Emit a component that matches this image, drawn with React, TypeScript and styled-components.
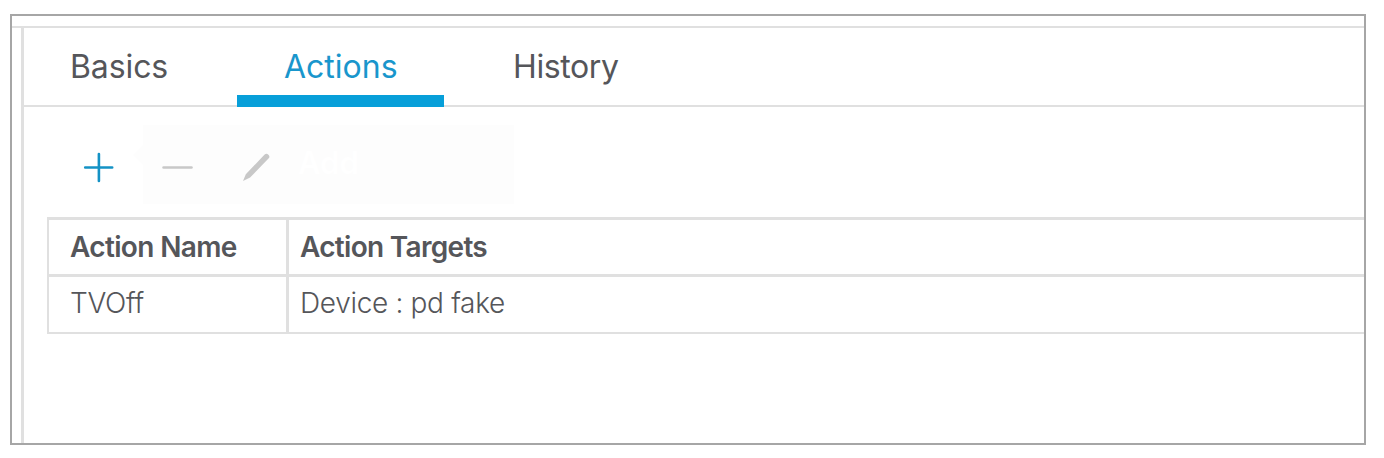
import React from "react";
import styled, { createGlobalStyle } from "styled-components";

const GlobalStyle = createGlobalStyle`
  * { box-sizing: border-box; }
  body {
    margin: 0;
    background: #ffffff;
    color: #55565a;
    font-family: Inter, "Liberation Sans", sans-serif;
  }
`;

const Page = styled.div`
  width: 1384px;
  height: 458px;
  padding: 14px 18px 13px 10px;
`;

const Frame = styled.div`
  height: 431px;
  border: 2px solid #a6a6a6;
  padding-top: 10px;
  overflow: hidden;
`;

const Body = styled.div`
  height: 417px;
  border-top: 2px solid #e0e0e0;
  padding-left: 9px;
`;

const Panel = styled.main`
  height: 415px;
  border-left: 3px solid #e0e0e0;
`;

const TabBar = styled.nav`
  display: flex;
  height: 79px;
  border-bottom: 2px solid #e0e0e0;
`;

const Tab = styled.button<{ $width: number; $inset: number; $spacing: number; $active?: boolean }>`
  flex: none;
  width: ${(p) => p.$width}px;
  height: 79px;
  margin: 0;
  padding: 0 0 0 ${(p) => p.$inset}px;
  border: 0;
  border-bottom: 12px solid ${(p) => (p.$active ? "#079fd9" : "transparent")};
  background: none;
  color: ${(p) => (p.$active ? "#1996cc" : "inherit")};
  font: 400 32px/78px Inter, "Liberation Sans", sans-serif;
  letter-spacing: ${(p) => p.$spacing}px;
  text-align: left;
  white-space: nowrap;
`;

const Toolbar = styled.div`
  position: relative;
  display: flex;
  align-items: center;
  height: 110px;
  padding: 10px 0 0 59px;
  gap: 47px;
`;

const ToolIcon = styled.svg`
  position: relative;
  z-index: 1;
  flex: none;
  display: block;
`;

const Tooltip = styled.div`
  position: absolute;
  left: 119px;
  top: 18px;
  width: 371px;
  height: 79px;
  padding-left: 155px;
  background: #fdfdfd;
  color: #ffffff;
  font-size: 31px;
  font-weight: 600;
  line-height: 75px;

  &::before {
    content: "";
    position: absolute;
    left: -10px;
    top: 20px;
    border: solid transparent;
    border-width: 10px 10px 10px 0;
    border-right-color: #fdfdfd;
  }
`;

const Table = styled.div`
  margin-left: 23px;
  border: solid #e0e0e0;
  border-width: 3px 0 2px 2px;
`;

const Row = styled.div<{ $head?: boolean }>`
  display: grid;
  grid-template-columns: 240px 1fr;
  height: ${(p) => (p.$head ? 57 : 55)}px;
  border-bottom: ${(p) => (p.$head ? "3px solid #e0e0e0" : "0")};
  font-size: 28px;
  font-weight: ${(p) => (p.$head ? 600 : 300)};
  line-height: ${(p) => (p.$head ? 54 : 52)}px;
`;

const Cell = styled.div<{ $first?: boolean; $spacing: number }>`
  padding-left: ${(p) => (p.$first ? 21 : 11)}px;
  border-right: ${(p) => (p.$first ? "3px solid #e0e0e0" : "0")};
  letter-spacing: ${(p) => p.$spacing}px;
  white-space: nowrap;
`;

export default function App() {
  return (
    <Page>
      <GlobalStyle />
      <Frame>
        <Body>
          <Panel>
            <TabBar>
              <Tab $width={213} $inset={46} $spacing={-0.1}>Basics</Tab>
              <Tab $width={207} $inset={47} $spacing={0} $active>Actions</Tab>
              <Tab $width={207} $inset={69} $spacing={-0.4}>History</Tab>
            </TabBar>
            <Toolbar>
              <Tooltip>Add</Tooltip>
              <ToolIcon width="32" height="32" viewBox="0 0 32 32" aria-label="Add">
                <path d="M2.2 16.5H29.2M15.9 3V30" stroke="#1492c5" strokeWidth="2.6" strokeLinecap="round" />
              </ToolIcon>
              <ToolIcon width="32" height="32" viewBox="0 0 32 32" aria-label="Remove">
                <path d="M1.5 16.5H29.5" stroke="#c8c8c8" strokeWidth="2.5" strokeLinecap="round" />
              </ToolIcon>
              <ToolIcon width="32" height="32" viewBox="0 0 32 32" aria-label="Edit">
                <path d="M2 29.9L4.8 23.2L23.4 3.8Q25.4 1.8 27.4 3.7Q29.4 5.6 27.5 7.6L9.1 26.5Z" fill="#c8c8c8" />
              </ToolIcon>
            </Toolbar>
            <Table>
              <Row $head>
                <Cell $first $spacing={-0.65}>Action Name</Cell>
                <Cell $spacing={-0.7}>Action Targets</Cell>
              </Row>
              <Row>
                <Cell $first $spacing={-0.3}>TVOff</Cell>
                <Cell $spacing={-0.32}>Device : pd fake</Cell>
              </Row>
            </Table>
          </Panel>
        </Body>
      </Frame>
    </Page>
  );
}
